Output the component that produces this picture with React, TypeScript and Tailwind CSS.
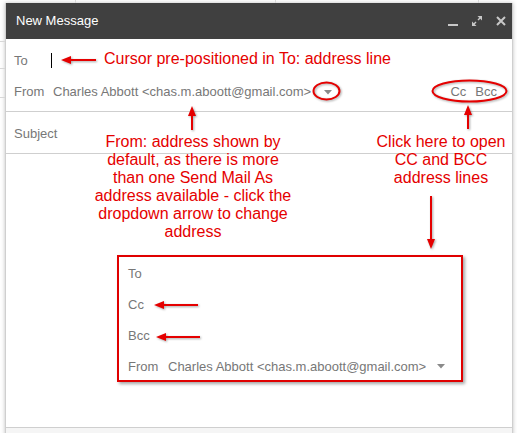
import React from 'react';

const RED = '#e50000';

// Red callout arrow: a shaft with a filled head at (x2, y2)
const Arrow = ({ x1, y1, x2, y2 }: { x1: number; y1: number; x2: number; y2: number }) => {
  const ang = Math.atan2(y2 - y1, x2 - x1);
  const len = 10;
  const half = 4;
  const bx = x2 - len * Math.cos(ang);
  const by = y2 - len * Math.sin(ang);
  const px = -Math.sin(ang) * half;
  const py = Math.cos(ang) * half;
  return (
    <g>
      <line x1={x1} y1={y1} x2={bx} y2={by} stroke={RED} strokeWidth={2} />
      <polygon points={`${x2},${y2} ${bx + px},${by + py} ${bx - px},${by - py}`} fill={RED} />
    </g>
  );
};

const Caret = () => (
  <svg width="8" height="5" viewBox="0 0 8 5" className="shrink-0">
    <polygon points="0,0 8,0 4,4.5" fill="#8a8a8a" />
  </svg>
);

export default function App() {
  return (
    <div className="relative w-[517px] h-[433px] overflow-hidden bg-white font-['Liberation_Sans',Arial,sans-serif]">
      {/* page behind the compose window */}
      <div className="absolute left-0 top-[41px] w-[5px] h-px bg-[#d8d8d8]" />
      <div className="absolute left-0 top-[68px] w-[5px] h-px bg-[#d8d8d8]" />
      <div className="absolute left-0 top-[97px] w-[5px] h-px bg-[#d8d8d8]" />
      <div className="absolute left-[75px] top-0 w-px h-[3px] bg-[#d8d8d8]" />
      <div className="absolute left-[275px] top-0 w-px h-[3px] bg-[#d8d8d8]" />
      <div className="absolute left-[478px] top-0 w-px h-[3px] bg-[#d8d8d8]" />

      {/* compose window */}
      <div className="ml-[5px] mt-[3px] w-[508px] flex flex-col border-x border-[#cfcfcf] shadow-[0_0_4px_rgba(0,0,0,0.25)] bg-white">
        <div className="h-[36px] bg-[#404040] flex items-center justify-between pl-[10px] pr-[6px]">
          <span className="text-[13px] text-white">New Message</span>
          <div className="flex items-center gap-[14px]">
            <svg width="10" height="10" viewBox="0 0 10 10">
              <rect x="0" y="8" width="10" height="2" fill="#c8c8c8" />
            </svg>
            <svg width="10" height="10" viewBox="0 0 10 10">
              <polygon points="10,0 10,4.5 5.5,0" fill="#c8c8c8" />
              <polygon points="0,10 0,5.5 4.5,10" fill="#c8c8c8" />
              <line x1="8" y1="2" x2="6" y2="4" stroke="#c8c8c8" strokeWidth="1.5" />
              <line x1="2" y1="8" x2="4" y2="6" stroke="#c8c8c8" strokeWidth="1.5" />
            </svg>
            <svg width="10" height="10" viewBox="0 0 10 10">
              <path d="M1 1 L9 9 M9 1 L1 9" stroke="#c8c8c8" strokeWidth="2" />
            </svg>
          </div>
        </div>

        <div className="pt-[6px] pb-[5px] border-b border-[#cfcfcf] text-[13px] text-[#777]">
          <div className="h-[30px] flex items-center pl-[8px] pt-[1px]">
            <span className="w-[37px]">To</span>
            <div className="w-px h-[15px] bg-black" />
          </div>
          <div className="h-[31px] flex items-center pl-[8px] pr-[15px] pt-[3px]">
            <span className="w-[39px]">From</span>
            <span>Charles Abbott &lt;chas.m.aboott@gmail.com&gt;</span>
            <span className="ml-[13px]"><Caret /></span>
            <span className="ml-auto">Cc</span>
            <span className="ml-[9px]">Bcc</span>
          </div>
        </div>

        <div className="h-[42px] flex items-center pl-[8px] pt-[3px] border-b border-[#cfcfcf] text-[13px] text-[#777]">
          Subject
        </div>

        <div className="h-[273px] pt-[101px] pl-[111px]">
          <div className="w-[346px] h-[127px] border-2 border-[#e00000] shadow-[2px_2px_3px_rgba(0,0,0,0.35)] px-[9px] pt-[1px] text-[13px] text-[#777]">
            <div className="h-[31px] flex items-center">To</div>
            <div className="h-[31px] flex items-center">Cc</div>
            <div className="h-[31px] flex items-center">Bcc</div>
            <div className="h-[31px] flex items-center">
              <span className="w-[40px]">From</span>
              <span>Charles Abbott &lt;chas.m.aboott@gmail.com&gt;</span>
              <span className="ml-[11px]"><Caret /></span>
            </div>
          </div>
        </div>

        <div className="h-[10px] border-t border-[#cfcfcf] bg-[#f5f5f5]" />
      </div>

      {/* callouts */}
      <svg
        className="absolute inset-0 pointer-events-none [filter:drop-shadow(1px_1px_1px_rgba(0,0,0,0.35))]"
        width="517"
        height="433"
      >
        <Arrow x1={96} y1={60} x2={61} y2={60} />
        <ellipse cx={326.5} cy={91} rx={13} ry={8.5} fill="none" stroke={RED} strokeWidth={2} />
        <ellipse cx={469.5} cy={91} rx={37} ry={10.5} fill="none" stroke={RED} strokeWidth={2} />
        <Arrow x1={192} y1={130} x2={192} y2={106} />
        <Arrow x1={468} y1={129} x2={468} y2={105} />
        <Arrow x1={431} y1={196} x2={431} y2={249} />
        <Arrow x1={198} y1={305} x2={154} y2={305} />
        <Arrow x1={200} y1={337} x2={156} y2={337} />
      </svg>

      <div className="absolute left-[104px] top-[50px] text-[16px] leading-[18px] whitespace-nowrap text-[#e50000]">
        Cursor pre-positioned in To: address line
      </div>
      <div className="absolute left-[83px] top-[133px] w-[220px] text-center text-[16px] leading-[18px] whitespace-nowrap text-[#e50000]">
        From: address shown by<br />
        default, as there is more<br />
        than one Send Mail As<br />
        address available - click the<br />
        dropdown arrow to change<br />
        address
      </div>
      <div className="absolute left-[371px] top-[133px] w-[140px] text-center text-[16px] leading-[18px] whitespace-nowrap text-[#e50000]">
        Click here to open<br />
        CC and BCC<br />
        address lines
      </div>
    </div>
  );
}
